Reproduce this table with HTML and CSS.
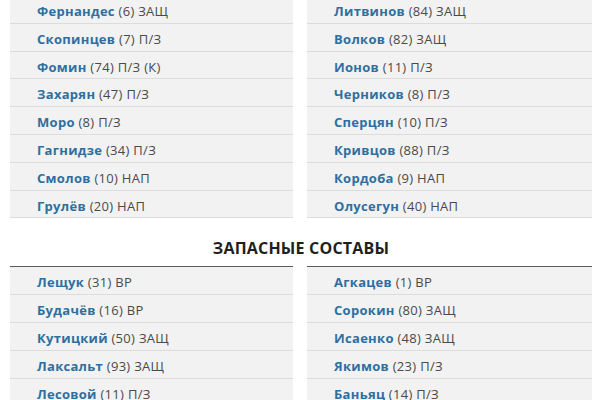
FILE: index.html
```html
<!DOCTYPE html>
<html lang="ru">
<head>
<meta charset="utf-8">
<link rel="stylesheet" href="styles.css">
</head>
<body>
<div class="page">
  <div class="cols">
    <ul class="list">
      <li><b>Фернандес</b> (6) ЗАЩ</li>
      <li><b>Скопинцев</b> (7) П/З</li>
      <li><b>Фомин</b> (74) П/З (К)</li>
      <li><b>Захарян</b> (47) П/З</li>
      <li><b>Моро</b> (8) П/З</li>
      <li><b>Гагнидзе</b> (34) П/З</li>
      <li><b>Смолов</b> (10) НАП</li>
      <li><b>Грулёв</b> (20) НАП</li>
    </ul>
    <ul class="list">
      <li><b>Литвинов</b> (84) ЗАЩ</li>
      <li><b>Волков</b> (82) ЗАЩ</li>
      <li><b>Ионов</b> (11) П/З</li>
      <li><b>Черников</b> (8) П/З</li>
      <li><b>Сперцян</b> (10) П/З</li>
      <li><b>Кривцов</b> (88) П/З</li>
      <li><b>Кордоба</b> (9) НАП</li>
      <li><b>Олусегун</b> (40) НАП</li>
    </ul>
  </div>
  <h2 class="title">Запасные составы</h2>
  <div class="cols bench">
    <ul class="list">
      <li><b>Лещук</b> (31) ВР</li>
      <li><b>Будачёв</b> (16) ВР</li>
      <li><b>Кутицкий</b> (50) ЗАЩ</li>
      <li><b>Лаксальт</b> (93) ЗАЩ</li>
      <li><b>Лесовой</b> (11) П/З</li>
    </ul>
    <ul class="list">
      <li><b>Агкацев</b> (1) ВР</li>
      <li><b>Сорокин</b> (80) ЗАЩ</li>
      <li><b>Исаенко</b> (48) ЗАЩ</li>
      <li><b>Якимов</b> (23) П/З</li>
      <li><b>Баньяц</b> (14) П/З</li>
    </ul>
  </div>
</div>
</body>
</html>
```
FILE: styles.css
```css
html, body {
  margin: 0;
  padding: 0;
  background: #ffffff;
}
body {
  font-family: "Open Sans", "Noto Sans", sans-serif;
  overflow: hidden;
}
.page {
  margin-top: -4px;
  padding: 0 8px 0 10px;
}
.cols {
  display: grid;
  grid-template-columns: 283px 285px;
  column-gap: 14px;
}
.list {
  list-style: none;
  margin: 0;
  padding: 0;
}
.list li {
  height: 26.8px;
  line-height: 31px;
  border-bottom: 1px solid #dcdcdc;
  background: #f2f2f2;
  padding-left: 27px;
  font-size: 13px;
  letter-spacing: 0.3px;
  color: #4a4a4a;
  white-space: nowrap;
}
.list b {
  color: #2f6f9f;
  font-weight: 700;
}
.title {
  margin: 0;
  height: 48px;
  line-height: 60px;
  text-align: center;
  font-size: 16px;
  font-weight: 700;
  text-transform: uppercase;
  color: #1f1f1f;
  letter-spacing: 0.2px;
}
.bench .list {
  border-top: 1.5px solid #5a5a5a;
}
```
